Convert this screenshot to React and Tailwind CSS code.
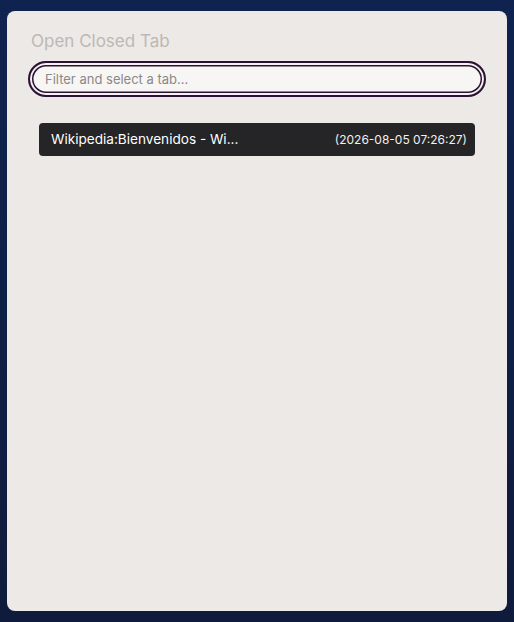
import React from 'react';

const tabs = [
  { title: 'Wikipedia:Bienvenidos - Wi...', date: '(2026-08-05 07:26:27)' },
];

const App = () => {
  return (
    <div className="min-h-screen w-full bg-gradient-to-b from-[#0f2350] to-[#0e1b3c] px-[7px] pt-[11px] pb-[11px]" style={{ fontFamily: 'Inter, "Noto Sans", sans-serif' }}>
      <div className="h-[600px] w-[500px] rounded-[8px] bg-[#ede9e6] px-[21px] pt-[19px]">
        <h1 className="ml-[3px] text-[17px] leading-[22px] font-normal text-[#bcb8b5]">Open Closed Tab</h1>
        <div className="mt-[9px]">
          <input
            type="text"
            placeholder="Filter and select a tab..."
            className="h-[36px] w-[458px] rounded-full border-2 border-[#2a1431] bg-[#f8f6f5] px-[15px] text-[13px] text-[#333] outline-none placeholder:text-[#8a8886] shadow-[inset_0_0_0_2px_#f8f0f6,inset_0_0_0_3.5px_#2a1431]"
          />
        </div>
        <ul className="mt-[26px] mx-[11px]">
          {tabs.map((t) => (
            <li key={t.date} className="flex h-[33px] items-center justify-between rounded-[4px] bg-[#252427] pl-[12px] pr-[8px]">
              <span className="text-[13.6px] text-white">{t.title}</span>
              <span className="text-[12px] text-[#f1f1f1]">{t.date}</span>
            </li>
          ))}
        </ul>
      </div>
    </div>
  );
};

export default App;
